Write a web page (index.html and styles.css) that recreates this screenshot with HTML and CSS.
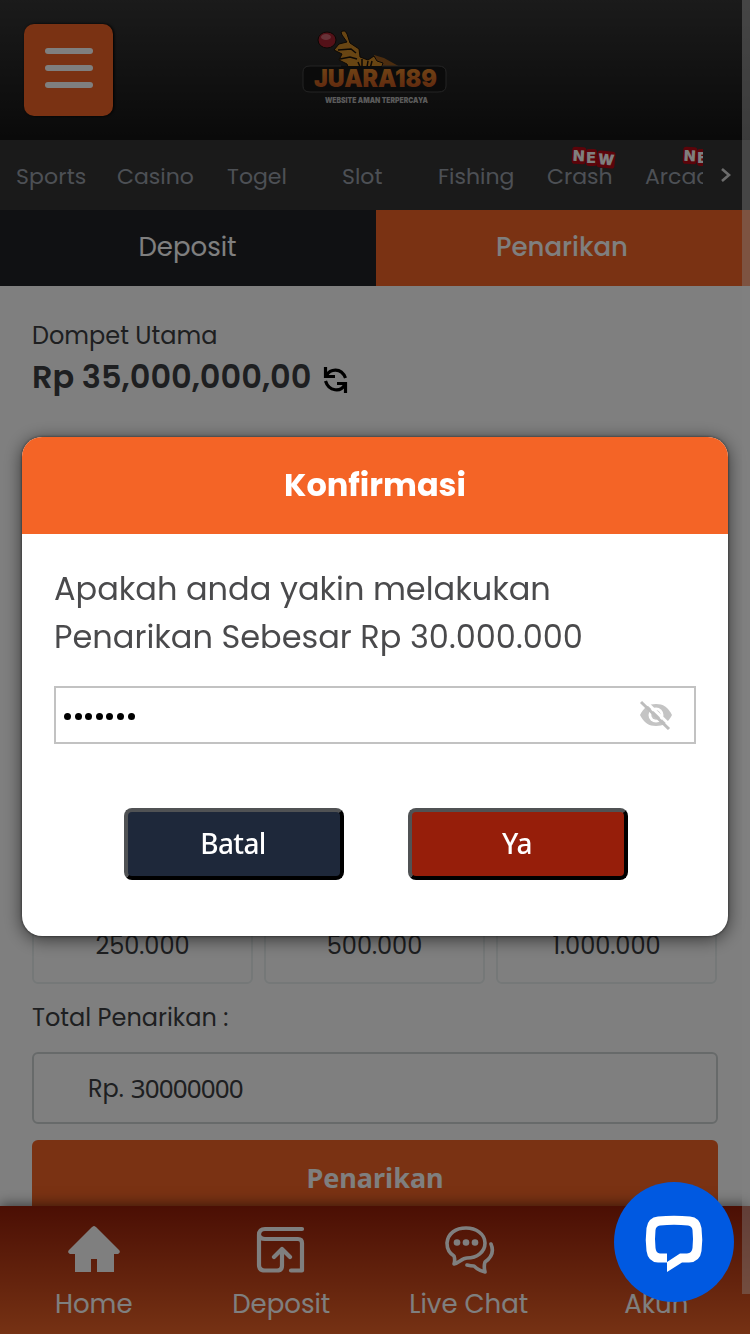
FILE: index.html
```html
<!DOCTYPE html>
<html lang="id">
<head>
<meta charset="utf-8">
<title>Juara189 - Penarikan</title>
<link rel="stylesheet" href="styles.css">
</head>
<body>
<div class="page">
  <header class="topbar">
    <button class="menu-btn" aria-label="Menu"><i></i><i></i><i></i></button>
    <svg class="logo" width="146" height="80" viewBox="0 0 146 80">
      <defs>
        <linearGradient id="gold" x1="0" y1="0" x2="0" y2="1"><stop offset="0" stop-color="#e8902c"/><stop offset="1" stop-color="#b8481c"/></linearGradient>
      </defs>
      <path fill="#985b1e" d="M72 27l10 3 27 15-24-4-12-2z"/>
      <path fill="#d08a26" stroke="#17100a" stroke-width="1" d="M39 4q4-3 6 2l3 9 9 6 1 8 8 3 6-4 3 5 6 2-3 9H48l-3-8-8-4 3-6-8-4 5-6 8-2-5-7z"/>
      <path fill="none" stroke="#17100a" stroke-width="1.500" d="M36 22l13-1 5 4M38 31l10-2 7 2M56 34l3 7 6-2 1-6M70 33l-2 8M60 31v7"/>
      <ellipse cx="25" cy="12" rx="9" ry="8" fill="#a82330" stroke="#17100a"/>
      <ellipse cx="24" cy="9" rx="5" ry="3" fill="#cf6670"/>
      <path fill="#171717" stroke="#484848" d="M39 38H8q-7 0-7 6v14q0 6 7 6h128q8 0 8-6V44q0-6-8-6H80"/>
      <text class="logo-name" x="12" y="59" textLength="123" lengthAdjust="spacingAndGlyphs" fill="url(#gold)">JUARA189</text>
      <text class="logo-tag" x="23" y="75" textLength="103" lengthAdjust="spacingAndGlyphs">WEBSITE AMAN TERPERCAYA</text>
    </svg>
  </header>
  <nav class="cats">
    <div class="cats-list">
      <span class="cat sports">Sports</span>
      <span class="cat casino">Casino</span>
      <span class="cat togel">Togel</span>
      <span class="cat slot">Slot</span>
      <span class="cat fishing">Fishing</span>
      <span class="cat crash">Crash<span class="new"><b>N</b><b>E</b><b>W</b></span></span>
      <span class="cat arcade">Arcade<span class="new"><b>N</b><b>E</b><b>W</b></span></span>
    </div>
    <svg class="next" width="12" height="16" viewBox="0 0 12 16"><path d="M2 2l7 6-7 6" fill="none" stroke="#d8d8d8" stroke-width="2.6"/></svg>
  </nav>
  <div class="tabs">
    <div class="tab tab-dep">Deposit</div>
    <div class="tab tab-wd">Penarikan</div>
  </div>
  <main class="content">
    <div class="wallet-label">Dompet Utama</div>
    <div class="wallet-row">
      <span class="wallet-amount">Rp 35,000,000,00</span>
      <svg width="26" height="26" viewBox="0 0 26 26" fill="none" stroke="#000" stroke-width="3.200"><path d="M2.500 0v9.500H12M3.500 8.500C7 2 18 0 22.500 11M22.500 26v-9.500H14M21.500 18C18 25 6 25 2.500 14"/></svg>
    </div>
    <div class="chips">
      <div class="chip">250.000</div>
      <div class="chip">500.000</div>
      <div class="chip">1.000.000</div>
    </div>
    <div class="total-label">Total Penarikan :</div>
    <div class="total-field"><span class="cur">Rp.</span><span class="val">30000000</span></div>
    <button class="submit">Penarikan</button>
  </main>
</div>
<footer class="bottom">
  <div class="item">
    <svg width="54" height="52" viewBox="0 0 54 52" fill="#fff"><path d="M27 2c1 0 2 1 3 2l22 22c2 2 0 4-2 4h-3v18H30V35h-6v13H8V30H4c-2 0-4-2-2-4L24 4c1-1 2-2 3-2z"/></svg>
    <span class="lbl">Home</span>
  </div>
  <div class="item">
    <svg width="54" height="52" viewBox="0 0 54 52" fill="none" stroke="#fff" stroke-width="4.200" stroke-linecap="round" stroke-linejoin="round"><path d="M48 5H11q-6 0-6 6v30q0 5.500 6 5.500h12q5 0 5-5V27M20 33l8-8 8 8M5 11q1 4 6 4h33q4 0 4 4v27.500H37"/></svg>
    <span class="lbl">Deposit</span>
  </div>
  <div class="item">
    <svg width="54" height="52" viewBox="0 0 54 52" fill="none" stroke="#fff" stroke-width="3.600" stroke-linecap="round" stroke-linejoin="round"><path d="M12 40c1-3 1-5 0-8C7 29 5 24 5 19 6 9 14 4 24 4s19 6 19 15-8 15-18 15c-5 0-8 5-13 6zM49 20c3 7 1 13-6 18-1 3-1 6 0 10-5-1-8-3-11-6q-3 0-7-1"/><g fill="#fff" stroke="none"><circle cx="15" cy="18.500" r="3.300"/><circle cx="24" cy="18.500" r="3.300"/><circle cx="33" cy="18.500" r="3.300"/></g></svg>
    <span class="lbl">Live Chat</span>
  </div>
  <div class="item">
    <svg width="54" height="52" viewBox="0 0 54 52" fill="#fff"><circle cx="27" cy="15" r="11"/><path d="M6 50q0-20 21-20t21 20z"/></svg>
    <span class="lbl">Akun</span>
  </div>
</footer>
<div class="overlay">
  <section class="modal">
    <h2 class="modal-head">Konfirmasi</h2>
    <div class="modal-body">
      <p class="question">Apakah anda yakin melakukan<br>Penarikan Sebesar Rp 30.000.000</p>
      <div class="pin">
        <span class="dots"><i></i><i></i><i></i><i></i><i></i><i></i><i></i></span>
        <svg width="34" height="30" viewBox="0 0 34 30"><path fill="#c4c4c4" d="M1 15C5 7 10 4 17 4s12 3 16 11c-4 8-9 11-16 11S5 23 1 15z"/><circle cx="17" cy="15" r="7.500" fill="#fff"/><circle cx="17" cy="15" r="4.700" fill="#c4c4c4"/><path d="M5 0l28 27" stroke="#fff" stroke-width="3"/><path d="M2 2l28 27" stroke="#bdbdbd" stroke-width="3"/></svg>
      </div>
      <div class="actions">
        <button class="btn cancel">Batal</button>
        <button class="btn yes">Ya</button>
      </div>
    </div>
  </section>
</div>
<div class="scroll-thumb"></div>
<button class="chat-fab" aria-label="Chat">
  <svg width="60" height="60" viewBox="0 0 60 60"><path fill="#fff" fill-rule="evenodd" d="M14 4.500Q30 3 46 4.500 56 5.500 57.500 16 59 28 57.500 39 56 50 45 50.500H38L23 60V50.500H14Q4 50 2.500 39 1 28 2.500 16 4 5.500 14 4.500zM16 13.500Q30 12 44 13.500 48 14 48.500 18 49.500 27 48.500 36 48 41 43 41.500H36L23 50V41.500H16Q12 41 11.500 36 10.500 27 11.500 18 12 14 16 13.500z"/></svg>
</button>
</body>
</html>
```
FILE: styles.css
```css
* { box-sizing: border-box; }
body { margin: 0; width: 750px; height: 1334px; overflow: hidden; background: #fff; font-family: Poppins, Inter, "Liberation Sans", sans-serif; color: #3c3e42; }
button { font: inherit; padding: 0; border: 0; }
.page { height: 1206px; overflow: hidden; display: flex; flex-direction: column; }

.topbar { flex: none; height: 140px; background: linear-gradient(#363636, #141414); display: grid; grid-template-columns: 1fr 146px 1fr; padding: 24px 0 0 24px; }
.topbar .logo { grid-column: 2; margin: 4px 0 0 -12px; }
.menu-btn { width: 89px; height: 92px; border-radius: 10px; background: #f46426; display: flex; flex-direction: column; align-items: center; padding-top: 24px; gap: 11px; box-shadow: 1px 0 3px #000; }
.menu-btn i { width: 48px; height: 6px; border-radius: 3px; background: #fff; }
.logo-name { font: 900 24px Inter, sans-serif; }
.logo-tag { font: 900 8px Inter, sans-serif; fill: #b4b4b4; }

.cats { flex: none; height: 70px; background: #343434; display: flex; color: #9aa0aa; font-size: 22px; }
.cats-list { width: 703px; padding-left: 16px; overflow: hidden; display: flex; line-height: 73px; white-space: nowrap; }
.cat { flex: none; position: relative; }
.sports { width: 101px; letter-spacing: .15px; }
.casino { width: 110px; }
.togel { width: 115px; }
.slot { width: 96px; }
.fishing { width: 109px; }
.crash { width: 98px; }
.arcade { width: 100px; }
.new { position: absolute; top: 7px; left: 25px; display: flex; font: 700 15px/17px Inter, sans-serif; color: #fff; }
.arcade .new { left: 38px; }
.new b { padding: 0 1px; background: #b80814; border-radius: 3px; transform: rotate(3deg); }
.new b:nth-child(2) { transform: translateY(2px); }
.new b:nth-child(3) { transform: translateY(4px) rotate(6deg); }
.next { margin: 27px 0 0 17px; }

.tabs { flex: none; height: 76px; display: grid; grid-template-columns: 376px 374px; font-size: 26px; line-height: 75px; text-align: center; color: #fff; }
.tab-dep { background: #202226; padding-right: 1px; }
.tab-wd { background: #f46426; font-weight: 500; padding-right: 2px; }

.content { padding: 32px 32px 0; display: flex; flex-direction: column; }
.wallet-label { font-size: 24px; line-height: 36px; }
.wallet-row { display: flex; align-items: center; gap: 12px; height: 46px; margin-bottom: 511px; }
.wallet-row svg { margin-top: 6px; }
.wallet-amount { font-size: 32px; font-weight: 600; }
.chips { display: grid; grid-template-columns: repeat(3, 221px); gap: 11px; }
.chip { height: 73px; border: 2px solid #eaf0f0; border-radius: 6px; text-align: center; font-size: 24px; line-height: 66px; }
.total-label { font-size: 24px; line-height: 36px; margin: 16px 0; }
.total-field { height: 72px; border: 2px solid #ced4d4; border-radius: 6px; padding-left: 54px; display: flex; align-items: center; gap: 7px; font-size: 24px; }
.total-field .val { font: 26px "Noto Sans", sans-serif; letter-spacing: -.9px; }
.submit { margin-top: 16px; height: 76px; flex: none; border-radius: 6px; background: #f46426; color: #fff; font: 700 27px "Noto Sans", sans-serif; padding-bottom: 2px; }

.bottom { height: 128px; background: linear-gradient(#961e08, #ec6428); display: grid; grid-template-columns: repeat(4, 1fr); box-shadow: 0 -2px 12px rgba(0,0,0,.5); position: relative; }
.item { display: flex; flex-direction: column; align-items: center; padding-top: 18px; }
.lbl { font-size: 26px; line-height: 36px; margin-top: 10px; color: #fff; }

.overlay { position: fixed; inset: 0; background: rgba(0,0,0,.5); padding: 437px 22px 0; }
.modal { height: 499px; border-radius: 20px; background: #fff; overflow: hidden; box-shadow: 0 3px 18px rgba(0,0,0,.6), 0 0 3px rgba(0,0,0,.6); }
.modal-head { margin: 0; height: 97px; background: #f46426; color: #fff; text-align: center; font-size: 32px; line-height: 95px; font-weight: 700; }
.modal-body { padding: 31px 32px 0; }
.question { margin: 0 0 25px; font-size: 32px; line-height: 48px; color: #4a4a4c; white-space: nowrap; }
.pin { height: 58px; border: 2px solid #c2c2c2; display: flex; align-items: center; justify-content: space-between; padding: 0 21px 0 8px; }
.dots { display: flex; gap: 3.600px; margin-top: 2px; }
.dots i { width: 7px; height: 7px; border-radius: 50%; background: #000; }
.actions { display: flex; gap: 64px; padding: 64px 0 0 70px; }
.btn { width: 220px; height: 72px; border: 4px solid; border-color: #505254 #000 #000 #505254; border-radius: 8px; color: #fff; font: 500 28px "Noto Sans", sans-serif; letter-spacing: -.6px; padding: 0 2px 2px 0; }
.cancel { background: #1e283a; }
.yes { background: #961e0a; }

.scroll-thumb { position: fixed; right: 0; top: 0; width: 8px; height: 1294px; background: rgba(128,128,128,.42); }
.chat-fab { position: fixed; left: 614px; top: 1182px; width: 120px; height: 120px; border-radius: 50%; background: #0059e1; display: flex; align-items: center; justify-content: center; }
```
